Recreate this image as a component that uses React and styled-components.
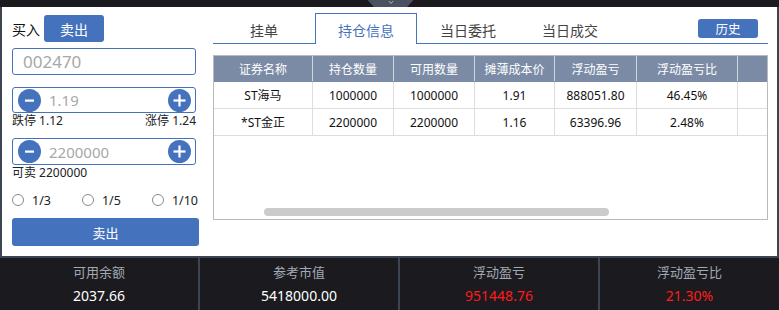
import React from "react";
import styled, { createGlobalStyle } from "styled-components";

const Global = createGlobalStyle`
  html, body { margin: 0; padding: 0; background: #1b1b1f; }
  body { font-family: "Noto Sans", "Noto Sans CJK SC", sans-serif; }
  * { box-sizing: border-box; }
`;

const BLUE = "#4472bd";

const Page = styled.div`
  width: 779px;
  height: 310px;
  display: flex;
  flex-direction: column;
  background: #1b1b1f;
  overflow: hidden;
`;

const TopBar = styled.div`
  height: 7px;
  flex: none;
  display: flex;
  justify-content: center;
  padding-left: 2px;
`;

const Handle = styled.div`
  width: 46px;
  height: 7px;
  background: #4a5262;
  clip-path: polygon(0 0, 100% 0, 86% 100%, 14% 100%);
  display: flex;
  justify-content: center;
  align-items: flex-start;
`;

const Main = styled.div`
  height: 251px;
  flex: none;
  background: #ffffff;
  border-left: 2px solid #3d4452;
  border-right: 2px solid #3d4452;
  border-bottom: 2px solid #3d4452;
  display: flex;
  padding: 7px 9px 0 10px;
  gap: 14px;
`;

const LeftPanel = styled.div`
  width: 187px;
  flex: none;
  display: flex;
  flex-direction: column;
`;

const SideRow = styled.div`
  display: flex;
  align-items: center;
  gap: 4px;
  margin-top: 1px;
  height: 27px;
`;

const SideLabel = styled.span`
  font-size: 14px;
  color: #111;
`;

const Button = styled.button`
  border: none;
  border-radius: 3px;
  background: ${BLUE};
  color: #fff;
  font-family: inherit;
  font-size: ${(p) => p.$size || 14}px;
  width: ${(p) => p.$w};
  height: ${(p) => p.$h}px;
  padding: 0;
  display: flex;
  align-items: center;
  justify-content: center;
  cursor: pointer;
  flex: none;
`;

const Field = styled.div`
  width: 184px;
  height: ${(p) => p.$h}px;
  margin-top: ${(p) => p.$mt}px;
  border: 1px solid ${BLUE};
  border-radius: 3px;
  display: flex;
  align-items: center;
  padding: 0 4px 0 5px;
  gap: 8px;
`;

const FieldText = styled.span`
  flex: 1;
  color: #a8a8a8;
  font-size: ${(p) => p.$size}px;
  padding-left: ${(p) => p.$pl || 0}px;
`;

const RoundBtn = styled.div`
  width: 23px;
  height: 23px;
  border-radius: 50%;
  background: ${BLUE};
  display: flex;
  align-items: center;
  justify-content: center;
  flex: none;
`;

const Note = styled.div`
  display: flex;
  justify-content: space-between;
  width: 184px;
  font-size: 12px;
  color: #222;
  line-height: 16px;
  height: ${(p) => p.$h || 16}px;
`;

const Radios = styled.div`
  display: flex;
  justify-content: space-between;
  width: 186px;
  margin-top: 11px;
  height: 16px;
  align-items: center;
`;

const RadioItem = styled.label`
  display: flex;
  align-items: center;
  gap: 8px;
  font-size: 12.5px;
  color: #222;
`;

const RadioDot = styled.span`
  width: 12px;
  height: 12px;
  border-radius: 50%;
  border: 1px solid #8a8a8a;
  background: #fff;
`;

const SubmitWrap = styled.div`
  margin-top: 10px;
`;

const RightPanel = styled.div`
  flex: 1;
  display: flex;
  flex-direction: column;
`;

const TabBar = styled.div`
  display: flex;
  align-items: flex-end;
  height: 30px;
  border-bottom: 1px solid ${BLUE};
  padding-right: 10px;
`;

const Tab = styled.div`
  width: 102px;
  height: ${(p) => (p.$active ? 31 : 30)}px;
  margin-bottom: ${(p) => (p.$active ? -1 : 0)}px;
  display: flex;
  align-items: center;
  justify-content: center;
  font-size: 14px;
  padding-top: 2px;
  color: ${(p) => (p.$active ? BLUE : "#444")};
  background: #fff;
  border: ${(p) => (p.$active ? `1px solid ${BLUE}` : "1px solid transparent")};
  border-bottom: none;
`;

const TabSpacer = styled.div`
  flex: 1;
`;

const HistoryWrap = styled.div`
  align-self: flex-start;
  margin-top: 5px;
`;

const Table = styled.div`
  margin-top: 11px;
  height: 165px;
  border: 1px solid #bbbbbb;
  display: flex;
  flex-direction: column;
`;

const Row = styled.div`
  display: grid;
  grid-template-columns: 99px 81px 81px 80px 82px 101px 1fr;
  height: ${(p) => (p.$head ? 26 : 27)}px;
  background: ${(p) => (p.$head ? "#7b8ba6" : "#fff")};
  border-bottom: 1px solid ${(p) => (p.$head ? "#7b8ba6" : "#dddddd")};
`;

const Cell = styled.div`
  display: flex;
  align-items: center;
  justify-content: center;
  font-size: 12px;
  color: ${(p) => (p.$head ? "#fff" : "#111")};
  border-right: 1px solid ${(p) => (p.$head ? "#d0d6e0" : "#dddddd")};
  white-space: nowrap;
  &:last-child { border-right: none; }
`;

const TableFill = styled.div`
  flex: 1;
`;

const ScrollTrack = styled.div`
  height: 8px;
  margin: 0 0 3px 50px;
`;

const ScrollThumb = styled.div`
  width: 345px;
  height: 8px;
  border-radius: 4px;
  background: #cbcbcb;
`;

const Stats = styled.div`
  flex: 1;
  display: grid;
  grid-template-columns: 198px 200px 200px 1fr;
`;

const Stat = styled.div`
  display: flex;
  flex-direction: column;
  align-items: center;
  padding-top: 4px;
  border-left: ${(p) => (p.$first ? "none" : "2px solid #3d4452")};
`;

const StatLabel = styled.div`
  font-size: 13px;
  color: #a3a9b3;
  line-height: 20px;
`;

const StatValue = styled.div`
  font-size: 14px;
  color: ${(p) => (p.$red ? "#ff1a1a" : "#ffffff")};
  line-height: 20px;
  margin-top: 4px;
`;

const Minus = () => (
  <svg width="11" height="11" viewBox="0 0 11 11">
    <rect x="1" y="4.5" width="9" height="2.2" fill="#fff" />
  </svg>
);
const Plus = () => (
  <svg width="13" height="13" viewBox="0 0 13 13">
    <rect x="0.5" y="5.4" width="12" height="2.2" fill="#fff" />
    <rect x="5.4" y="0.5" width="2.2" height="12" fill="#fff" />
  </svg>
);

const heads = ["证券名称", "持仓数量", "可用数量", "摊薄成本价", "浮动盈亏", "浮动盈亏比", ""];
const rows = [
  ["ST海马", "1000000", "1000000", "1.91", "888051.80", "46.45%", ""],
  ["*ST金正", "2200000", "2200000", "1.16", "63396.96", "2.48%", ""],
];

const stats = [
  { label: "可用余额", value: "2037.66" },
  { label: "参考市值", value: "5418000.00" },
  { label: "浮动盈亏", value: "951448.76", red: true },
  { label: "浮动盈亏比", value: "21.30%", red: true },
];

export default function App() {
  return (
    <Page>
      <Global />
      <TopBar>
        <Handle>
          <svg width="6" height="5" viewBox="0 0 6 5">
            <path d="M1 1 L3 3.5 L5 1" stroke="#c9a0aa" strokeWidth="1" fill="none" />
          </svg>
        </Handle>
      </TopBar>
      <Main>
        <LeftPanel>
          <SideRow>
            <SideLabel>买入</SideLabel>
            <Button $w="60px" $h={27}>卖出</Button>
          </SideRow>
          <Field $h={27} $mt={6}>
            <FieldText $size={17} $pl={5}>002470</FieldText>
          </Field>
          <Field $h={26} $mt={12}>
            <RoundBtn><Minus /></RoundBtn>
            <FieldText $size={15}>1.19</FieldText>
            <RoundBtn><Plus /></RoundBtn>
          </Field>
          <Note>
            <span>跌停 1.12</span>
            <span>涨停 1.24</span>
          </Note>
          <Field $h={27} $mt={9}>
            <RoundBtn><Minus /></RoundBtn>
            <FieldText $size={15}>2200000</FieldText>
            <RoundBtn><Plus /></RoundBtn>
          </Field>
          <Note>
            <span>可卖 2200000</span>
          </Note>
          <Radios>
            <RadioItem><RadioDot />1/3</RadioItem>
            <RadioItem><RadioDot />1/5</RadioItem>
            <RadioItem><RadioDot />1/10</RadioItem>
          </Radios>
          <SubmitWrap>
            <Button $w="187px" $h={28} $size={13}>卖出</Button>
          </SubmitWrap>
        </LeftPanel>
        <RightPanel>
          <TabBar>
            <Tab>挂单</Tab>
            <Tab $active>持仓信息</Tab>
            <Tab>当日委托</Tab>
            <Tab>当日成交</Tab>
            <TabSpacer />
            <HistoryWrap>
              <Button $w="60px" $h={19} $size={12.5}>历史</Button>
            </HistoryWrap>
          </TabBar>
          <Table>
            <Row $head>
              {heads.map((h, i) => (
                <Cell $head key={i}>{h}</Cell>
              ))}
            </Row>
            {rows.map((r, ri) => (
              <Row key={ri}>
                {r.map((c, ci) => (
                  <Cell key={ci}>{c}</Cell>
                ))}
              </Row>
            ))}
            <TableFill />
            <ScrollTrack>
              <ScrollThumb />
            </ScrollTrack>
          </Table>
        </RightPanel>
      </Main>
      <Stats>
        {stats.map((s, i) => (
          <Stat key={i} $first={i === 0}>
            <StatLabel>{s.label}</StatLabel>
            <StatValue $red={s.red}>{s.value}</StatValue>
          </Stat>
        ))}
      </Stats>
    </Page>
  );
}
